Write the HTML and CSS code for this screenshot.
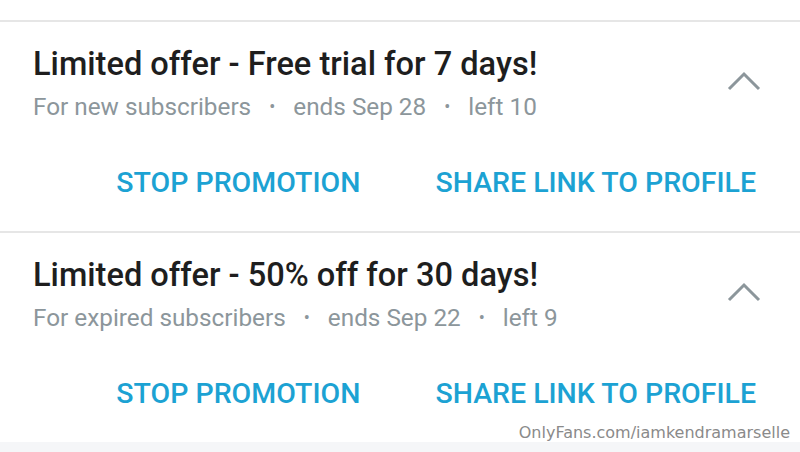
FILE: index.html
```html
<!DOCTYPE html>
<html lang="en">
<head>
    <meta charset="UTF-8">
    <meta name="viewport" content="width=device-width, initial-scale=1.0">
    <title>Promotions</title>
    <link rel="stylesheet" href="styles.css">
</head>
<body>
    <div class="top-gap"></div>

    <div class="promo">
        <div class="promo-head">
            <div class="promo-text">
                <h2 class="promo-title">Limited offer - Free trial for 7 days!</h2>
                <p class="promo-meta">For new subscribers <span class="dot">•</span> ends Sep 28 <span class="dot">•</span> left 10</p>
            </div>
            <svg class="chevron" width="36" height="20" viewBox="0 0 36 20">
                <path d="M3 18 L18 3 L33 18" fill="none" stroke="#8c969b" stroke-width="3"/>
            </svg>
        </div>
        <div class="promo-actions">
            <button class="action">STOP PROMOTION</button>
            <button class="action">SHARE LINK TO PROFILE</button>
        </div>
    </div>

    <div class="promo">
        <div class="promo-head">
            <div class="promo-text">
                <h2 class="promo-title">Limited offer - 50% off for 30 days!</h2>
                <p class="promo-meta">For expired subscribers <span class="dot">•</span> ends Sep 22 <span class="dot">•</span> left 9</p>
            </div>
            <svg class="chevron" width="36" height="20" viewBox="0 0 36 20">
                <path d="M3 18 L18 3 L33 18" fill="none" stroke="#8c969b" stroke-width="3"/>
            </svg>
        </div>
        <div class="promo-actions">
            <button class="action">STOP PROMOTION</button>
            <button class="action">SHARE LINK TO PROFILE</button>
        </div>
    </div>

    <div class="watermark">OnlyFans.com/iamkendramarselle</div>
</body>
</html>
```

FILE: styles.css
```css
body {
    margin: 0;
    background: #f5f6f8;
    font-family: Roboto, 'Noto Sans', sans-serif;
    height: 100vh;
    overflow: hidden;
}

.top-gap {
    height: 20px;
    background: #fff;
}

/* Promotion card */
.promo {
    background: #fff;
    border-top: 2px solid #e6e6e6;
    padding: 23px 40px 0 33px;
    box-sizing: border-box;
    height: 211px;
}

.promo:last-of-type {
    border-bottom: 2px solid #e6e6e6;
    height: 213px;
}

.promo-head {
    display: flex;
    justify-content: space-between;
    align-items: flex-start;
}

.promo-title {
    margin: 0;
    font-size: 32.6px;
    font-weight: 500;
    color: #1e1e1e;
    line-height: 38px;
}

.promo-meta {
    margin: 9px 0 0;
    font-size: 24.3px;
    color: #8c969b;
    line-height: 30px;
}

.dot {
    font-size: 18px;
    margin: 0 12px;
    vertical-align: 2px;
}

.chevron {
    margin-top: 26px;
    margin-right: -2px;
}

.promo-actions {
    display: flex;
    justify-content: flex-end;
    gap: 75px;
    margin-top: 45px;
    padding-right: 4px;
}

.action {
    background: none;
    border: none;
    padding: 0;
    font-family: Roboto, sans-serif;
    font-size: 28.5px;
    font-weight: 500;
    line-height: 32px;
    color: #1ca2d3;
    cursor: pointer;
}

.watermark {
    position: absolute;
    right: 10px;
    bottom: 10px;
    font-family: 'DejaVu Sans', sans-serif;
    font-size: 16px;
    color: #8a8a8a;
}
```
